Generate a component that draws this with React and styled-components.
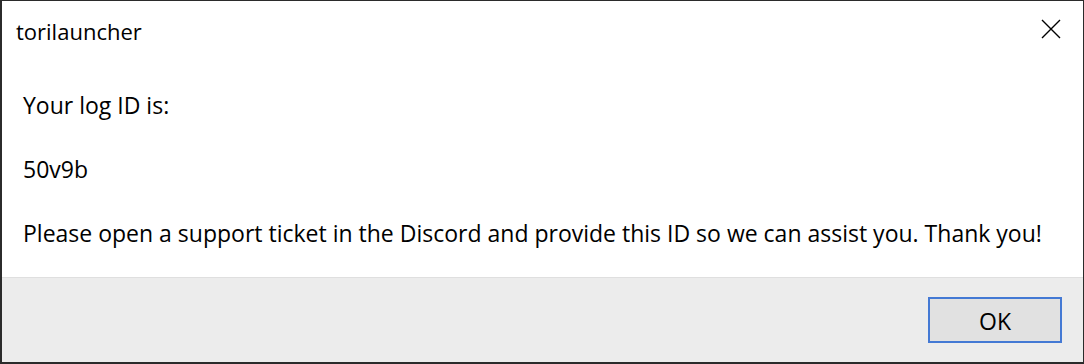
import React from "react";
import styled, { createGlobalStyle } from "styled-components";

const Global = createGlobalStyle`
  html, body { margin: 0; padding: 0; background: #2b2b2b; }
  body { width: 1084px; height: 364px; overflow: hidden; }
  * { box-sizing: border-box; }
`;

const Window = styled.div`
  width: 1084px;
  height: 364px;
  border-style: solid;
  border-color: #2b2b2b;
  border-width: 1px 1px 2px 2px;
  background: #ffffff;
  display: flex;
  flex-direction: column;
  font-family: "Open Sans", "Noto Sans", sans-serif;
  color: #000;
`;

const TitleBar = styled.div`
  height: 60px;
  flex: none;
  display: flex;
  align-items: center;
  justify-content: space-between;
  padding: 0 22px 0 14px;
  font-size: 22px;
`;

const Title = styled.span``;

const CloseButton = styled.button`
  width: 20px;
  height: 20px;
  padding: 0;
  border: none;
  background: transparent;
  display: flex;
  align-items: center;
  justify-content: center;
  margin-top: -4px;
`;

const Content = styled.div`
  flex: 1;
  padding: 28px 0 0 21px;
  display: flex;
  flex-direction: column;
  gap: 32px;
  font-size: 23px;
  line-height: 32px;
  white-space: nowrap;
`;

const Line = styled.div``;

const Footer = styled.div`
  height: 85px;
  flex: none;
  background: #ececec;
  border-top: 1px solid #dfdfdf;
  display: flex;
  align-items: flex-start;
  justify-content: flex-end;
  padding: 19px 21px 0 0;
`;

const OkButton = styled.button`
  width: 134px;
  height: 46px;
  background: #e1e1e1;
  border: 2px solid #4479d4;
  font-family: "Open Sans", "Noto Sans", sans-serif;
  font-size: 23px;
  line-height: 1;
  color: #000;
  padding: 2px 0 0 0;
`;

export default function App() {
  return (
    <>
      <Global />
      <Window>
        <TitleBar>
          <Title>torilauncher</Title>
          <CloseButton aria-label="Close">
            <svg width="20" height="20" viewBox="0 0 20 20">
              <path d="M1 1 L19 19 M19 1 L1 19" stroke="#000" strokeWidth="1.4" fill="none" />
            </svg>
          </CloseButton>
        </TitleBar>
        <Content>
          <Line>Your log ID is:</Line>
          <Line>50v9b</Line>
          <Line>Please open a support ticket in the Discord and provide this ID so we can assist you. Thank you!</Line>
        </Content>
        <Footer>
          <OkButton>OK</OkButton>
        </Footer>
      </Window>
    </>
  );
}
